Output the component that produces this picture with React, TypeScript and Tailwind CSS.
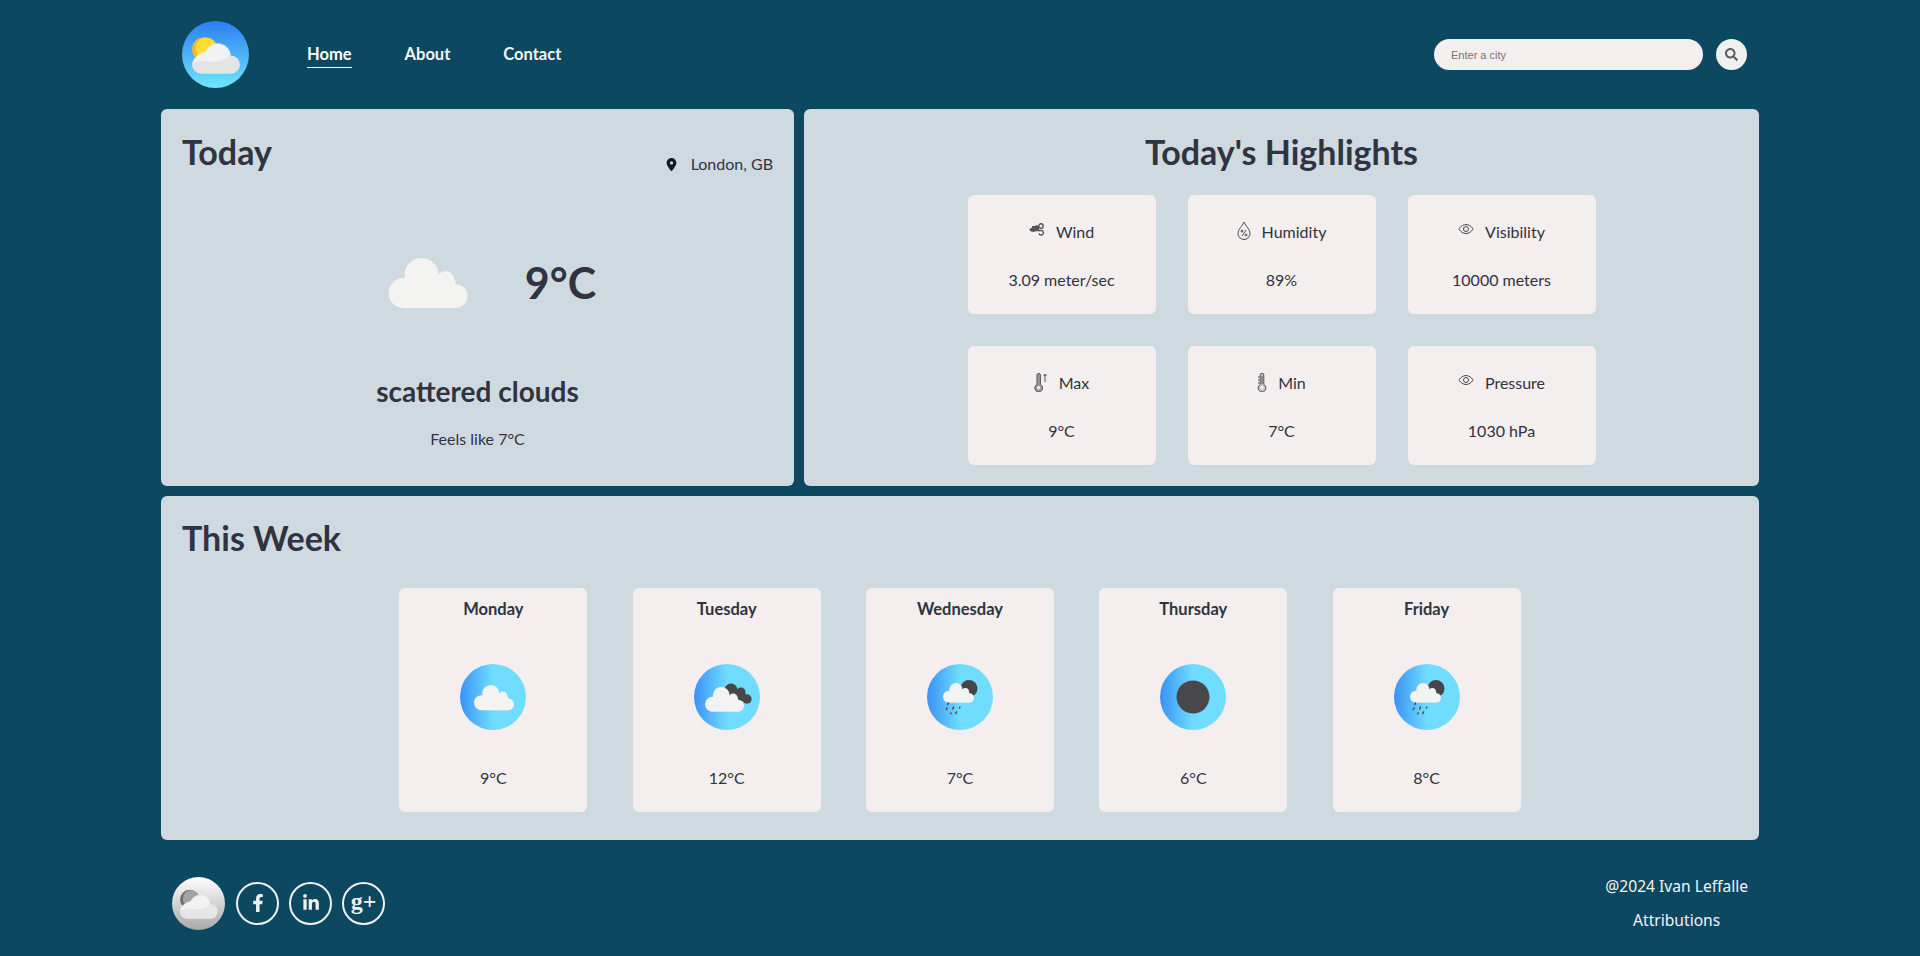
import { FaFacebookF, FaLinkedinIn, FaSearch } from 'react-icons/fa';
import { FaLocationDot } from 'react-icons/fa6';
import { IoEyeOutline } from 'react-icons/io5';
import type { ReactNode } from 'react';

const cloudShapes = (
  <>
    <circle cx="15" cy="35" r="15" />
    <circle cx="33" cy="17" r="17" />
    <circle cx="57" cy="22" r="9" />
    <circle cx="67" cy="38" r="12" />
    <rect x="15" y="22" width="52" height="28" />
  </>
);

function LogoArt({ size, grey, id }: { size: number; grey?: boolean; id: string }) {
  return (
    <svg width={size} height={size} viewBox="0 0 66 66" className="shrink-0">
      <defs>
        <linearGradient id={id} x1="0" y1="0" x2="0" y2="1">
          <stop offset="0" stopColor={grey ? '#ffffff' : '#2a7ff0'} />
          <stop offset="1" stopColor={grey ? '#a9a9a9' : '#6fe6ff'} />
        </linearGradient>
      </defs>
      <circle cx="33" cy="33" r="33" fill={`url(#${id})`} />
      <circle cx="22" cy="28" r="12" fill={grey ? '#6f6f6f' : '#f7b733'} />
      <circle cx="24" cy="27" r="10.5" fill={grey ? '#a3a3a3' : '#ffdd33'} />
      <g fill={grey ? '#e6e6e6' : '#e4e4e4'}>
        <circle cx="19" cy="43" r="9" />
        <circle cx="35" cy="35" r="13" />
        <circle cx="48" cy="43" r="9" />
        <rect x="19" y="37" width="29" height="15" />
      </g>
      <path d="M10 42 C 20 37, 26 41, 33 40 C 42 39, 49 36, 47 30 C 43 21, 30 20, 24 30 C 18 31, 12 35, 10 42 Z" fill="#f2f2f2" />
    </svg>
  );
}

function CloudGlyph({ x, y, w, fill = '#f3f3f1' }: { x: number; y: number; w: number; fill?: string }) {
  return (
    <g transform={`translate(${x} ${y}) scale(${w / 79})`} fill={fill}>
      {cloudShapes}
    </g>
  );
}

function Rain() {
  return (
    <g stroke="#46464a" strokeWidth="1.4" strokeLinecap="round">
      <path d="M21.5 39 l-.6 1.5" />
      <path d="M26.5 43 l-.8 2" />
      <path d="M29.5 48 l-.6 1.5" />
      <path d="M33 43 l-.6 1" />
      <path d="M24 49 l-.3 .8" />
      <path d="M20 44 l-.6 1.5" />
    </g>
  );
}

function WeekIcon({ kind, id }: { kind: string; id: string }) {
  return (
    <svg width="66" height="66" viewBox="0 0 66 66" className="shrink-0">
      <defs>
        <linearGradient id={id} x1="0" y1="0" x2="1" y2="0">
          <stop offset="0" stopColor="#3a92f5" />
          <stop offset="0.5" stopColor="#70dcff" />
          <stop offset="1" stopColor="#70dcff" />
        </linearGradient>
      </defs>
      <circle cx="33" cy="33" r="33" fill={`url(#${id})`} />
      {kind === 'cloud' && <CloudGlyph x={14} y={21} w={40} />}
      {kind === 'broken' && (
        <>
          <g fill="#48484b">
            <circle cx="37" cy="26" r="6.5" />
            <circle cx="47" cy="28" r="4.5" />
            <circle cx="53" cy="35" r="4.7" />
            <path d="M38 22 L52 30 L52 38 L40 36 Z" />
          </g>
          <CloudGlyph x={11} y={23} w={39} />
        </>
      )}
      {kind === 'rain' && (
        <>
          <circle cx="42" cy="24.5" r="8.5" fill="#46464a" />
          <CloudGlyph x={16} y={19} w={31} />
          <Rain />
        </>
      )}
      {kind === 'dark' && <circle cx="33" cy="33" r="16.5" fill="#48484b" />}
    </svg>
  );
}

function WindIcon() {
  return (
    <svg width="16" height="13" viewBox="0 0 16 13" className="mb-[6px]">
      <path d="M0 6.5 L3 4.5 L3 3 L6 3 L7 2 L10 3 L10 8 L7 8 L5 9 L2 8.5 Z" fill="#55555a" />
      <g fill="none" stroke="#55555a" strokeWidth="1.4">
        <circle cx="12" cy="3" r="2.2" />
        <path d="M7 7.5 L12.5 7.5 A2.3 2.3 0 1 1 10 10.5" />
      </g>
    </svg>
  );
}

function HumidityIcon() {
  return (
    <svg width="14" height="19" viewBox="0 0 14 19" className="mb-[3px]">
      <g fill="none" stroke="#4a4a4f" strokeWidth="1">
        <path d="M7 1 C 8.5 5 13 8 13 12.5 A6 6 0 0 1 1 12.5 C1 8 5.5 5 7 1 Z" />
        <path d="M9.2 9 L4.8 15" />
        <circle cx="5" cy="10" r="1" />
        <circle cx="9" cy="14" r="1" />
      </g>
    </svg>
  );
}

function MaxIcon() {
  return (
    <svg width="14" height="19" viewBox="0 0 14 19" className="mb-[2px]">
      <path d="M3 2 A1.7 1.7 0 0 1 6.4 2 L6.4 11.5 A3.9 3.9 0 1 1 3 11.5 Z" fill="#9a9a9d" stroke="#55555a" strokeWidth="1" />
      <circle cx="4.7" cy="14.7" r="1.6" fill="#f4eeee" />
      <path d="M11 9 L11 1.5 M9.6 3 L11 1 L12.4 3" fill="none" stroke="#55555a" strokeWidth="1" />
    </svg>
  );
}

function MinIcon() {
  return (
    <svg width="10" height="19" viewBox="0 0 10 19" className="mb-[2px]">
      <path d="M3.2 2 A1.8 1.8 0 0 1 6.8 2 L6.8 11.5 A3.9 3.9 0 1 1 3.2 11.5 Z" fill="#c4c4c6" stroke="#55555a" strokeWidth="1" />
      <circle cx="5" cy="14.7" r="1.6" fill="#f4eeee" />
      <path d="M5 3 L5 11 M1 4 L3 4 M1 7 L3 7 M1 10 L3 10" stroke="#55555a" strokeWidth="1" fill="none" />
    </svg>
  );
}

function EyeIcon() {
  return <IoEyeOutline size={16} className="mb-[6px] text-[#4a4a4f]" />;
}

function HighlightCard({ icon, label, value }: { icon: ReactNode; label: string; value: string }) {
  return (
    <div className="flex h-[119px] w-[188px] flex-col items-center rounded-md bg-[#f4eeee] pt-[25px] text-[#2f3440]">
      <div className="flex h-[24px] items-center gap-[11px] text-[16px] leading-[24px]">
        {icon}
        <span>{label}</span>
      </div>
      <div className="mt-[24px] text-[16px] leading-[24px]">{value}</div>
    </div>
  );
}

const week = [
  { day: 'Monday', kind: 'cloud', temp: '9°C' },
  { day: 'Tuesday', kind: 'broken', temp: '12°C' },
  { day: 'Wednesday', kind: 'rain', temp: '7°C' },
  { day: 'Thursday', kind: 'dark', temp: '6°C' },
  { day: 'Friday', kind: 'rain', temp: '8°C' },
];

const socialClass = 'flex h-[43px] w-[43px] items-center justify-center rounded-full border-2 border-[#f0f0f0]';

export default function App() {
  return (
    <div className="min-h-[956px] bg-[#0c4860] font-['Lato',sans-serif] text-[#2f3440]">
      <div className="mx-auto w-[1598px]">
        <header className="flex h-[109px] items-center pl-[21px] pr-[12px]">
          <LogoArt size={67} id="logo-main" />
          <nav className="ml-[58px] flex gap-[53px] text-[16.5px] font-bold leading-[24px] text-[#f4f4f4]">
            <a className="border-b border-white pb-[1px] text-white">Home</a>
            <a className="pb-[2px]">About</a>
            <a className="pb-[2px]">Contact</a>
          </nav>
          <div className="ml-auto flex items-center gap-[13px]">
            <input
              placeholder="Enter a city"
              className="h-[31px] w-[269px] rounded-full bg-[#f4eeee] pl-[17px] font-['Liberation_Sans',sans-serif] text-[11px] outline-none placeholder:text-[#757575]"
            />
            <button className="flex h-[31px] w-[31px] items-center justify-center rounded-full bg-[#f0f0f0] text-[#5f5f5f]">
              <FaSearch size={13} />
            </button>
          </div>
        </header>

        <div className="grid grid-cols-[633px_955px] gap-x-[10px] gap-y-[10px]">
          <section className="h-[377px] rounded-md bg-[#cfd9e0] px-[21px]">
            <div className="flex items-start justify-between">
              <h1 className="pt-[21px] text-[34px] font-bold leading-[44px]">Today</h1>
              <div className="flex items-center gap-[13px] pt-[43px] text-[16px] leading-[24px]">
                <FaLocationDot size={13} className="text-[#15181f]" />
                <span>London, GB</span>
              </div>
            </div>
            <div className="mt-[77px] flex items-center justify-center gap-[57px] pl-[29px]">
              <svg width="80" height="50" viewBox="0 0 79 50" fill="#f3f3f1">
                {cloudShapes}
              </svg>
              <div className="text-[43px] font-bold leading-[60px]">9°C</div>
            </div>
            <div className="mt-[60px] text-center text-[28px] font-bold leading-[36px]">scattered clouds</div>
            <div className="mt-[18px] text-center text-[16px] leading-[24px]">Feels like 7°C</div>
          </section>

          <section className="h-[377px] rounded-md bg-[#cfd9e0]">
            <h1 className="pt-[21px] text-center text-[34px] font-bold leading-[44px]">Today's Highlights</h1>
            <div className="mt-[21px] flex justify-center">
              <div className="grid grid-cols-[188px_188px_188px] gap-x-[32px] gap-y-[32px]">
                <HighlightCard icon={<WindIcon />} label="Wind" value="3.09 meter/sec" />
                <HighlightCard icon={<HumidityIcon />} label="Humidity" value="89%" />
                <HighlightCard icon={<EyeIcon />} label="Visibility" value="10000 meters" />
                <HighlightCard icon={<MaxIcon />} label="Max" value="9°C" />
                <HighlightCard icon={<MinIcon />} label="Min" value="7°C" />
                <HighlightCard icon={<EyeIcon />} label="Pressure" value="1030 hPa" />
              </div>
            </div>
          </section>

          <section className="col-span-2 h-[344px] rounded-md bg-[#cfd9e0] px-[21px]">
            <h1 className="pt-[20px] text-[34px] font-bold leading-[44px]">This Week</h1>
            <div className="mt-[28px] flex justify-center gap-[45.3px]">
              {week.map((d, i) => (
                <div
                  key={d.day}
                  className="flex h-[224px] w-[188px] flex-col items-center rounded-md bg-[#f4eeee] pt-[9px]"
                >
                  <div className="text-[16.5px] font-bold leading-[24px]">{d.day}</div>
                  <div className="mt-[43px]">
                    <WeekIcon kind={d.kind} id={`week-${i}`} />
                  </div>
                  <div className="mt-[36px] text-[16px] leading-[24px]">{d.temp}</div>
                </div>
              ))}
            </div>
          </section>
        </div>

        <footer className="flex items-center justify-between pl-[11px] pr-[11px] pt-[34px]">
          <div className="flex items-center gap-[11px]">
            <LogoArt size={53} grey id="logo-footer" />
            <div className="flex gap-[10px] text-[#f0f0f0]">
              <a className={socialClass}>
                <FaFacebookF size={18} />
              </a>
              <a className={socialClass}>
                <FaLinkedinIn size={18} />
              </a>
              <a className={socialClass}>
                <span className="pb-[4px] font-['Liberation_Serif',serif] text-[24px] font-bold leading-[24px]">g+</span>
              </a>
            </div>
          </div>
          <div className="flex flex-col items-center gap-[10px] font-['Noto_Sans',sans-serif] text-[15.6px] leading-[24px] text-[#f4f4f4]">
            <span>@2024 Ivan Leffalle</span>
            <span>Attributions</span>
          </div>
        </footer>
      </div>
    </div>
  );
}
